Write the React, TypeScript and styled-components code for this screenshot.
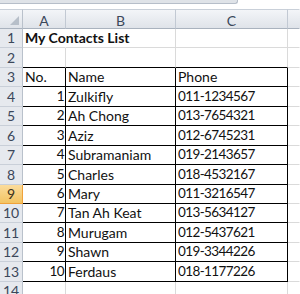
import React from 'react';
import styled, { createGlobalStyle } from 'styled-components';

const Global = createGlobalStyle`
  html, body { margin: 0; padding: 0; background: #ffffff; }
  body { width: 300px; height: 294px; overflow: hidden; font-family: Lato, "Liberation Sans", sans-serif; }
`;

const Sheet = styled.div`
  width: 300px;
  height: 294px;
  overflow: hidden;
  display: flex;
  flex-direction: column;
  background: #ffffff;
`;

const TopStrip = styled.div`
  height: 9px;
  flex: none;
  display: flex;
  align-items: flex-start;
  background: #ffffff;
`;

const Tab = styled.div`
  width: 237px;
  height: 3px;
  background: #dfe3e8;
  border-right: 1px solid #b6bec9;
  border-bottom: 1px solid #b6bec9;
  border-bottom-right-radius: 3px;
`;

const Grid = styled.div`
  display: grid;
  grid-template-columns: 23px 43px 110px 112px 12px;
  grid-template-rows: 20px repeat(14, 19.45px);
`;

const Corner = styled.div`
  box-sizing: border-box;
  background: linear-gradient(#f3f5f8, #dfe3e9);
  border-right: 1px solid #b9c1cb;
  border-bottom: 1px solid #a9b2be;
  border-top: 1px solid #c9d0d9;
  display: flex;
  align-items: flex-end;
  justify-content: flex-end;
  padding: 0 3px 3px 0;
`;

const ColHeader = styled.div<{ $last?: boolean }>`
  box-sizing: border-box;
  background: linear-gradient(#f3f5f8, #dfe3e9);
  border-right: 1px solid ${p => (p.$last ? 'transparent' : '#c2c9d3')};
  border-bottom: 1px solid #a9b2be;
  border-top: 1px solid #c9d0d9;
  display: flex;
  align-items: center;
  justify-content: center;
  padding-top: 3px;
  font-size: 14px;
  color: #3b475a;
`;

const RowHeader = styled.div<{ $active?: boolean }>`
  box-sizing: border-box;
  background: ${p => (p.$active ? 'linear-gradient(#fbdc9c, #f3c463)' : '#e6e9ee')};
  border-right: 1px solid ${p => (p.$active ? '#f0a23a' : '#b9c1cb')};
  border-bottom: 1px solid ${p => (p.$active ? '#f0a23a' : '#c9cfd8')};
  display: flex;
  align-items: flex-end;
  justify-content: center;
  padding-bottom: 1px;
  font-size: 14px;
  line-height: 17px;
  color: ${p => (p.$active ? '#3a3220' : '#3b475a')};
  overflow: hidden;
`;

const Cell = styled.div<{
  $right?: boolean;
  $boxR?: boolean;
  $boxB?: boolean;
  $noR?: boolean;
  $bold?: boolean;
  $digits?: boolean;
}>`
  box-sizing: border-box;
  border-right: 1px solid ${p => (p.$noR ? 'transparent' : p.$boxR ? '#000000' : '#dadada')};
  border-bottom: 1px solid ${p => (p.$boxB ? '#000000' : '#dadada')};
  display: flex;
  align-items: flex-end;
  justify-content: ${p => (p.$right ? 'flex-end' : 'flex-start')};
  padding: 0 ${p => (p.$right ? 1 : 2)}px 1px 2px;
  font-size: ${p => (p.$digits ? 13.5 : 14)}px;
  line-height: 17px;
  letter-spacing: ${p => (p.$digits ? -0.6 : 0)}px;
  font-weight: ${p => (p.$bold ? 700 : 400)};
  color: #111111;
  white-space: nowrap;
  overflow: visible;
`;

const contacts = [
  { name: 'Zulkifly', phone: '011-1234567' },
  { name: 'Ah Chong', phone: '013-7654321' },
  { name: 'Aziz', phone: '012-6745231' },
  { name: 'Subramaniam', phone: '019-2143657' },
  { name: 'Charles', phone: '018-4532167' },
  { name: 'Mary', phone: '011-3216547' },
  { name: 'Tan Ah Keat', phone: '013-5634127' },
  { name: 'Murugam', phone: '012-5437621' },
  { name: 'Shawn', phone: '019-3344226' },
  { name: 'Ferdaus', phone: '018-1177226' },
];

export default function App() {
  return (
    <Sheet>
      <Global />
      <TopStrip>
        <Tab />
      </TopStrip>
      <Grid>
        <Corner>
          <svg width="9" height="9" viewBox="0 0 9 9">
            <polygon points="9,0 9,9 0,9" fill="#b7bfc9" />
          </svg>
        </Corner>
        <ColHeader>A</ColHeader>
        <ColHeader>B</ColHeader>
        <ColHeader>C</ColHeader>
        <ColHeader $last />

        <RowHeader>1</RowHeader>
        <Cell $bold $noR>My Contacts List</Cell>
        <Cell />
        <Cell />
        <Cell $noR />

        <RowHeader>2</RowHeader>
        <Cell $boxB />
        <Cell $boxB />
        <Cell $boxB />
        <Cell $noR />

        <RowHeader>3</RowHeader>
        <Cell $boxR $boxB>No.</Cell>
        <Cell $boxR $boxB>Name</Cell>
        <Cell $boxR $boxB>Phone</Cell>
        <Cell $noR />

        {contacts.map((c, i) => (
          <React.Fragment key={c.name}>
            <RowHeader $active={i + 4 === 9}>{i + 4}</RowHeader>
            <Cell $right $digits $boxR $boxB>{i + 1}</Cell>
            <Cell $boxR $boxB>{c.name}</Cell>
            <Cell $digits $boxR $boxB>{c.phone}</Cell>
            <Cell $noR />
          </React.Fragment>
        ))}

        <RowHeader>14</RowHeader>
        <Cell />
        <Cell />
        <Cell />
        <Cell $noR />
      </Grid>
    </Sheet>
  );
}
